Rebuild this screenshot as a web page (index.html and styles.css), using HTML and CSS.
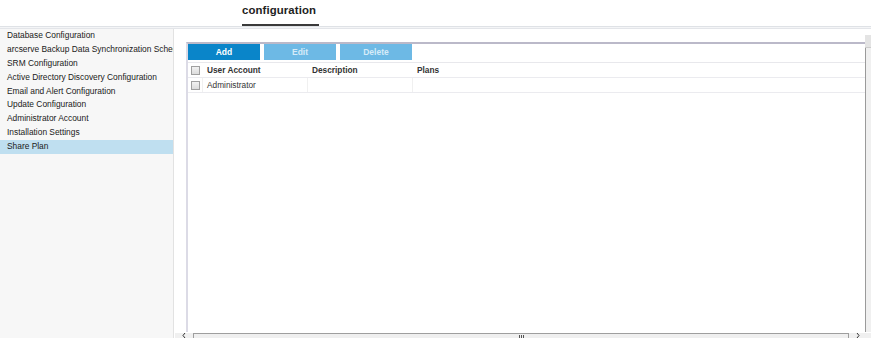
FILE: index.html
```html
<!DOCTYPE html>
<html>
<head>
<meta charset="utf-8">
<link rel="stylesheet" href="styles.css">
</head>
<body>
<div class="page">
  <div class="header">
    <div class="title">configuration</div>
  </div>
  <div class="rule"></div>
  <div class="content">
    <div class="sidebar">
      <div class="item">Database Configuration</div>
      <div class="item">arcserve Backup Data Synchronization Schedule</div>
      <div class="item">SRM Configuration</div>
      <div class="item">Active Directory Discovery Configuration</div>
      <div class="item">Email and Alert Configuration</div>
      <div class="item">Update Configuration</div>
      <div class="item">Administrator Account</div>
      <div class="item">Installation Settings</div>
      <div class="item selected">Share Plan</div>
    </div>
    <div class="main">
      <div class="mainbody">
        <div class="panel">
          <div class="toolbar">
            <button class="btn primary">Add</button>
            <button class="btn disabled">Edit</button>
            <button class="btn disabled">Delete</button>
          </div>
          <div class="grid">
            <div class="row head">
              <div class="cell chk"><span class="box"></span></div>
              <div class="cell c1">User Account</div>
              <div class="cell c2">Description</div>
              <div class="cell c3">Plans</div>
            </div>
            <div class="row">
              <div class="cell chk"><span class="box"></span></div>
              <div class="cell c1">Administrator</div>
              <div class="cell c2"></div>
              <div class="cell c3"></div>
            </div>
          </div>
        </div>
        <div class="vscroll"><div class="vtop"></div></div>
      </div>
      <div class="hscroll">
        <div class="arrow left"><svg width="4" height="5" viewBox="0 0 4 5"><path d="M3 0 L1 2.5 L3 5" fill="none" stroke="#333" stroke-width="1"/></svg></div>
        <div class="htrack"><span class="grip"></span></div>
        <div class="arrow right"><svg width="4" height="5" viewBox="0 0 4 5"><path d="M1 0 L3 2.5 L1 5" fill="none" stroke="#333" stroke-width="1"/></svg></div>
      </div>
    </div>
  </div>
</div>
</body>
</html>
```
FILE: styles.css
```css
* { box-sizing: border-box; }
html, body { margin: 0; padding: 0; background: #fff; }
body {
  font-family: "Liberation Sans", Arial, sans-serif;
  font-size: 9px;
  color: #222;
  width: 871px;
  height: 338px;
  overflow: hidden;
}
.page { display: flex; flex-direction: column; height: 338px; }
.header { height: 26px; padding-left: 242px; }
.title {
  display: inline-block;
  font-size: 11.4px;
  font-weight: bold;
  color: #222;
  height: 26px;
  padding-top: 4px;
  width: 77px;
  border-bottom: 2px solid #3a3a3a;
  letter-spacing: 0.1px;
}
.rule {
  height: 3px;
  border-top: 1px solid #dfe2e6;
  border-bottom: 1px solid #e3e5e9;
  background: #f4f5f7;
}
.content { flex: 1; display: flex; min-height: 0; }
.sidebar {
  width: 174px;
  background: #f7f7f7;
  border-right: 1px solid #e2e2e2;
  overflow: hidden;
}
.item {
  height: 13.9px;
  line-height: 13.9px;
  padding-left: 7px;
  white-space: nowrap;
  overflow: hidden;
  color: #1a1a1a;
  font-size: 8.4px;
}
.item.selected { background: #bfdff0; }
.main { flex: 1; display: flex; flex-direction: column; min-width: 0; }
.mainbody { flex: 1; display: flex; min-height: 0; }
.panel {
  flex: 1;
  margin: 13px 0 0 12px;
  border-top: 2px solid #bbb9c9;
  border-left: 2px solid #dcdbe6;
  display: flex;
  flex-direction: column;
}
.toolbar { display: flex; gap: 4px; padding: 0; height: 18px; }
.btn {
  width: 72px;
  height: 16px;
  border: 0;
  padding: 0;
  font-family: "Liberation Sans", Arial, sans-serif;
  font-size: 8.5px;
  font-weight: bold;
  color: #fff;
  background: #0a85c9;
}
.btn.disabled { background: #6db9e5; color: #d6ebf8; }
.grid { margin-top: 0; border-top: 1px solid #e8e8ec; }
.row {
  display: flex;
  height: 15px;
  border-bottom: 1px solid #ebebef;
}
.cell {
  line-height: 14px;
  padding-left: 4px;
  border-right: 1px solid #f0f0f0;
  white-space: nowrap;
  font-size: 8.3px;
}
.row.head .cell { font-weight: bold; color: #333; border-right: 0; }
.cell.chk { width: 15px; padding-left: 3px; padding-top: 3px; }
.cell.c1 { width: 105px; color: #333; }
.cell.c2 { width: 105px; }
.cell.c3 { flex: 1; border-right: 0; }
.box {
  display: block;
  width: 9px;
  height: 9px;
  border: 1px solid #a0a0a0;
  background: linear-gradient(#f2f2f2, #dcdcdc);
}
.vscroll {
  width: 6px;
  margin-top: 6px;
  border-left: 1px solid #9a9a9a;
  background: #f0f0f0;
  display: flex;
  flex-direction: column;
}
.vtop { height: 13px; background: #e4e4e4; border-bottom: 1px solid #ccc; margin-left: -1px; }
.hscroll {
  height: 5px;
  display: flex;
  margin-left: 1px;
  margin-top: 1px;
  background: #f0f0f0;
}
.arrow { width: 18px; display: flex; justify-content: center; align-items: flex-end; background: #f0f0f0; }
.arrow.right { margin-right: 4px; }
.htrack {
  flex: 1;
  border-top: 1px solid #9e9e9e;
  border-left: 1px solid #9e9e9e;
  border-right: 1px solid #9e9e9e;
  background: #efefef;
  display: flex;
  justify-content: center;
}
.grip {
  width: 5px;
  height: 3px;
  margin-top: 1px;
  background: repeating-linear-gradient(90deg, #555 0 1px, transparent 1px 2px);
}
```
